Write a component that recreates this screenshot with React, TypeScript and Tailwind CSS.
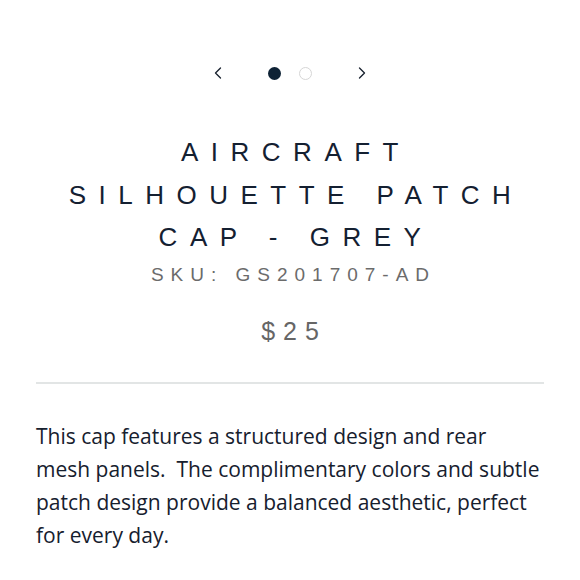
import { ChevronLeft, ChevronRight } from "lucide-react";

export default function App() {
  return (
    <div className="min-h-[580px] w-[580px] bg-white px-9 pt-[63px] font-['Liberation_Sans',sans-serif]">
      <div className="flex items-center justify-center">
        <button className="text-[#1a2330]">
          <ChevronLeft size={20} strokeWidth={1.6} />
        </button>
        <div className="mx-[40px] flex items-center gap-[18px]">
          <span className="block h-[13px] w-[13px] rounded-full bg-[#0e2235]" />
          <span className="block h-[13px] w-[13px] rounded-full border-[1.5px] border-[#d6d6d6]" />
        </div>
        <button className="text-[#1a2330]">
          <ChevronRight size={20} strokeWidth={1.6} />
        </button>
      </div>

      <h1 className="mt-[48px] pl-[12px] text-center text-[26px] leading-[42.5px] tracking-[12.5px] text-[#142031]">
        AIRCRAFT
        <br />
        SILHOUETTE PATCH
        <br />
        CAP - GREY
      </h1>
      <div className="mt-[4px] pl-[7px] text-center text-[19px] leading-[24px] tracking-[7px] text-[#6b6b6b]">
        SKU: GS201707-AD
      </div>
      <div className="mt-[29px] pl-[8px] text-center text-[25px] leading-[30px] tracking-[8px] text-[#666]">
        $25
      </div>

      <hr className="mt-[36px] border-t-2 border-[#e2e5e5]" />

      <p className="mt-[36px] font-['Open_Sans',sans-serif] text-[21px] leading-[33.3px] text-[#16202e]">
        This cap features a structured design and rear mesh panels.&nbsp; The complimentary colors and subtle patch design provide a balanced aesthetic, perfect for every day.
      </p>
    </div>
  );
}
